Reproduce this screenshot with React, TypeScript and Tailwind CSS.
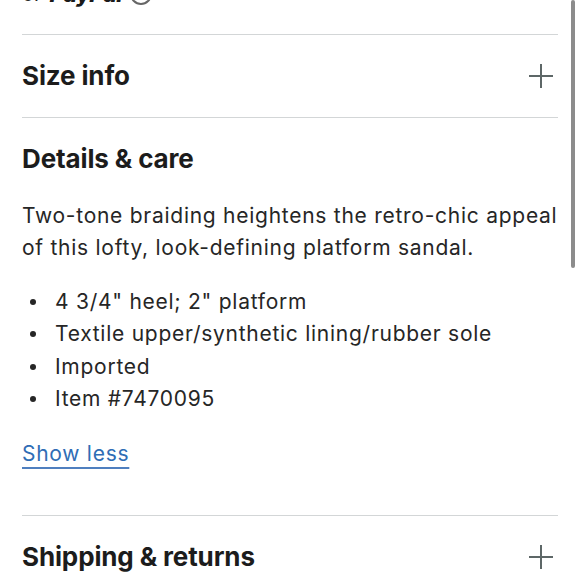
import React from "react";

function Plus() {
  return (
    <svg width="24" height="26" viewBox="0 0 24 26" fill="none">
      <path d="M12 1v24M0 13h24" stroke="#5d6767" strokeWidth="2" />
    </svg>
  );
}

const bullets = [
  '4 3/4" heel; 2" platform',
  "Textile upper/synthetic lining/rubber sole",
  "Imported",
  "Item #7470095",
];

export default function App() {
  return (
    <div className="relative w-[580px] h-[580px] overflow-hidden bg-white text-[#222]" style={{ fontFamily: "Inter, 'Noto Sans', sans-serif" }}>
      <div className="px-[22px]">
        <div className="h-[8px] overflow-hidden">
          <div className="-mt-[20px] flex items-center gap-[8px] h-[28px]">
            <span className="text-[20px] text-[#222]">or</span>
            <span className="text-[22px] font-extrabold italic text-[#1a1a1a] tracking-tight">PayPal</span>
            <span className="w-[22px] h-[22px] rounded-full border-2 border-[#666]" />
          </div>
        </div>
        <div className="h-[26px]" />
        <div className="border-t border-[#d3d6d7]">
          <div className="flex items-center justify-between py-[25px]">
            <h2 className="text-[26px] leading-[32px] font-bold tracking-[-0.005em] text-[#1c1c1c]">Size info</h2>
            <div className="mr-[5px]"><Plus /></div>
          </div>
        </div>
        <div className="border-t border-[#d3d6d7] pt-[25px] pb-[45px]">
          <h2 className="text-[26px] leading-[32px] font-bold tracking-[-0.005em] text-[#1c1c1c]">Details &amp; care</h2>
          <p className="mt-[25px] text-[21px] leading-[32px] tracking-[0.035em] text-[#262626]">
            Two-tone braiding heightens the retro-chic appeal of this lofty, look-defining platform sandal.
          </p>
          <ul className="mt-[22px]">
            {bullets.map((b) => (
              <li key={b} className="flex items-center text-[21px] leading-[32.3px] tracking-[0.035em] text-[#262626]">
                <span className="w-[6px] h-[6px] rounded-full bg-[#262626] ml-[8px] mr-[19px]" />
                <span>{b}</span>
              </li>
            ))}
          </ul>
          <div className="mt-[23px]">
            <span className="text-[21px] leading-[32px] tracking-[0.035em] text-[#2f6db5] underline decoration-2 underline-offset-[6px] decoration-[#4f7fbf]">Show less</span>
          </div>
        </div>
        <div className="border-t border-[#d3d6d7]">
          <div className="flex items-center justify-between pt-[25px]">
            <h2 className="text-[26px] leading-[32px] font-bold tracking-[-0.005em] text-[#1c1c1c]">Shipping &amp; returns</h2>
            <div className="mr-[5px]"><Plus /></div>
          </div>
        </div>
      </div>
      <div className="absolute right-[5px] top-0 w-[4px] h-[268px] rounded-full bg-[#8c8c8c]" />
    </div>
  );
}
